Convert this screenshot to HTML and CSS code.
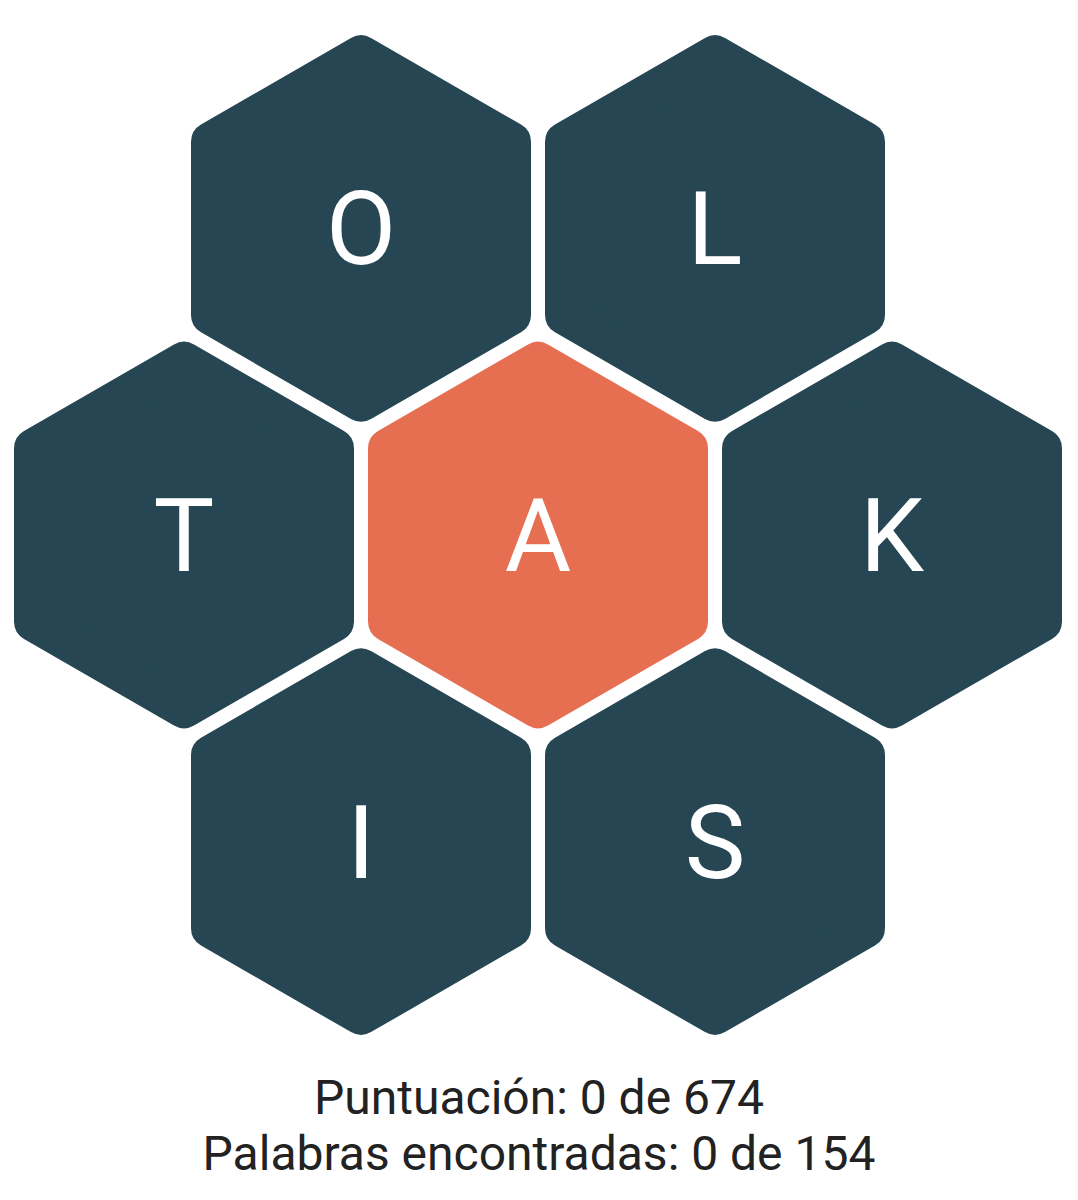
FILE: index.html
```html
<!DOCTYPE html>
<html lang="es">
<head>
<meta charset="utf-8">
<title>Panal</title>
<link rel="stylesheet" href="styles.css">
</head>
<body>
<main class="page">
  <svg class="board" viewBox="0 0 1078 1070" width="1078" height="1070" xmlns="http://www.w3.org/2000/svg">
    <g class="cell" transform="translate(361 228.4)">
      <path class="hex" d="M0 -173.2 L150 -86.6 L150 86.6 L0 173.2 L-150 86.6 L-150 -86.6 Z"/>
      <text class="letter" x="0" y="36">O</text>
    </g>
    <g class="cell" transform="translate(715 228.4)">
      <path class="hex" d="M0 -173.2 L150 -86.6 L150 86.6 L0 173.2 L-150 86.6 L-150 -86.6 Z"/>
      <text class="letter" x="0" y="36">L</text>
    </g>
    <g class="cell" transform="translate(184 535)">
      <path class="hex" d="M0 -173.2 L150 -86.6 L150 86.6 L0 173.2 L-150 86.6 L-150 -86.6 Z"/>
      <text class="letter" x="0" y="36">T</text>
    </g>
    <g class="cell center" transform="translate(538 535)">
      <path class="hex" d="M0 -173.2 L150 -86.6 L150 86.6 L0 173.2 L-150 86.6 L-150 -86.6 Z"/>
      <text class="letter" x="0" y="36">A</text>
    </g>
    <g class="cell" transform="translate(892 535)">
      <path class="hex" d="M0 -173.2 L150 -86.6 L150 86.6 L0 173.2 L-150 86.6 L-150 -86.6 Z"/>
      <text class="letter" x="0" y="36">K</text>
    </g>
    <g class="cell" transform="translate(361 841.6)">
      <path class="hex" d="M0 -173.2 L150 -86.6 L150 86.6 L0 173.2 L-150 86.6 L-150 -86.6 Z"/>
      <text class="letter" x="0" y="36">I</text>
    </g>
    <g class="cell" transform="translate(715 841.6)">
      <path class="hex" d="M0 -173.2 L150 -86.6 L150 86.6 L0 173.2 L-150 86.6 L-150 -86.6 Z"/>
      <text class="letter" x="0" y="36">S</text>
    </g>
  </svg>
  <section class="stats">
    <p class="stat">Puntuación: 0 de 674</p>
    <p class="stat">Palabras encontradas: 0 de 154</p>
  </section>
</main>
</body>
</html>
```
FILE: styles.css
```css
html, body {
  margin: 0;
  padding: 0;
  background: #ffffff;
}

body {
  font-family: Roboto, "Liberation Sans", Arial, sans-serif;
}

.page {
  width: 1078px;
  display: flex;
  flex-direction: column;
  align-items: center;
}

.board {
  display: block;
}

.hex {
  fill: #264653;
  stroke: #264653;
  stroke-width: 40;
  stroke-linejoin: round;
}

.center .hex {
  fill: #e76f51;
  stroke: #e76f51;
}

.letter {
  fill: #ffffff;
  font-family: Roboto, "Liberation Sans", Arial, sans-serif;
  font-size: 102px;
  text-anchor: middle;
}

.stats {
  text-align: center;
  color: #222222;
  font-size: 48px;
  line-height: 56px;
}

.stat {
  margin: 0;
}
```
